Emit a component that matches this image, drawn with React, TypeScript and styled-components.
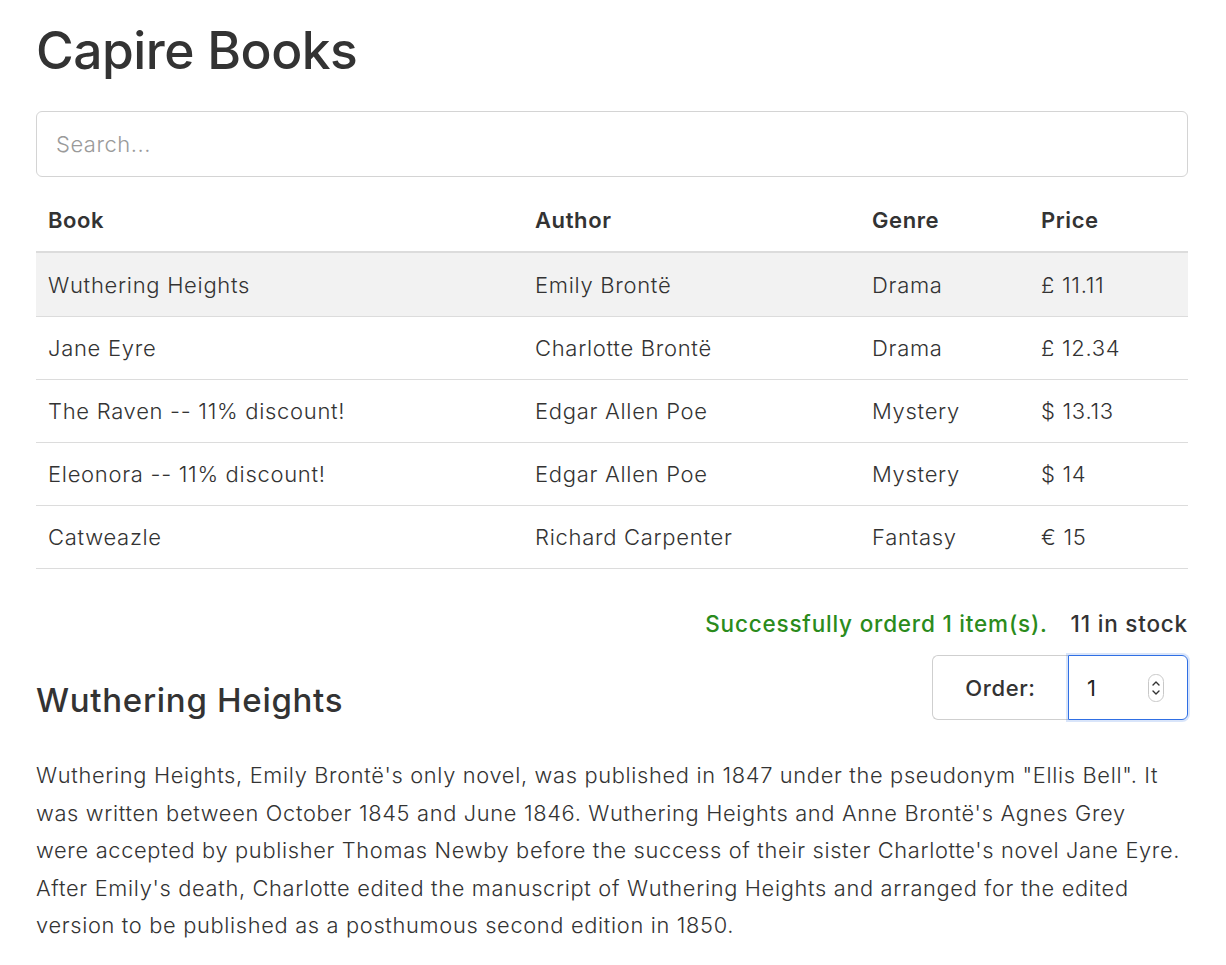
import React from "react";
import styled, { createGlobalStyle } from "styled-components";

const GlobalStyle = createGlobalStyle`
  html, body { margin: 0; padding: 0; background: #fff; }
  body {
    font-family: Inter, "Noto Sans", "Liberation Sans", sans-serif;
    color: #333;
    -webkit-font-smoothing: antialiased;
  }
  * { box-sizing: border-box; }
`;

const Page = styled.div`
  padding: 0 38px 0 36px;
  width: 1226px;
`;

const Title = styled.h1`
  font-size: 51.5px;
  font-weight: 500;
  line-height: 1.2;
  margin: 20px 0 29px;
  letter-spacing: -0.5px;
`;

const Search = styled.input`
  display: block;
  width: 100%;
  height: 66px;
  border: 1px solid #d4d4d4;
  border-radius: 6px;
  padding: 0 19px;
  font-family: inherit;
  font-size: 22px;
  font-weight: 300;
  letter-spacing: 0.5px;
  color: #333;
  outline: none;
  &::placeholder { color: #9a9a9a; }
`;

const Table = styled.table`
  width: 100%;
  border-collapse: collapse;
  margin-top: 13px;
  font-size: 22px;
  table-layout: fixed;
`;

const Th = styled.th<{ $w: number }>`
  width: ${(p) => p.$w}px;
  text-align: left;
  font-weight: 600;
  letter-spacing: 0.6px;
  height: 62px;
  padding: 0 12px;
  border-bottom: 2px solid #dcdcdc;
  vertical-align: middle;
`;

const Tr = styled.tr<{ $active?: boolean }>`
  background: ${(p) => (p.$active ? "#f2f2f2" : "transparent")};
  &:first-child td { height: 65px; }
`;

const Td = styled.td`
  height: 63px;
  padding: 0 12px;
  font-weight: 300;
  letter-spacing: 0.7px;
  border-bottom: 1px solid #dcdcdc;
  vertical-align: middle;
  white-space: nowrap;
`;

const StatusRow = styled.div`
  display: flex;
  justify-content: flex-end;
  gap: 23px;
  margin-top: 40px;
  font-size: 22.5px;
  font-weight: 500;
  letter-spacing: 0.8px;
  line-height: 30px;
`;

const Success = styled.span`
  color: #2b8b1c;
`;

const OrderRow = styled.div`
  display: flex;
  justify-content: space-between;
  align-items: flex-end;
  margin-top: 16px;
`;

const BookTitle = styled.h3`
  font-size: 33px;
  font-weight: 500;
  margin: 0;
  line-height: 1.2;
  letter-spacing: 0.7px;
`;

const InputGroup = styled.div`
  display: flex;
  height: 65px;
`;

const Addon = styled.div`
  width: 136px;
  display: flex;
  align-items: center;
  justify-content: center;
  border: 1px solid #cfcfcf;
  border-right: none;
  border-radius: 6px 0 0 6px;
  font-size: 22px;
  font-weight: 500;
  letter-spacing: 0.6px;
`;

const NumberBox = styled.div`
  width: 120px;
  display: flex;
  align-items: center;
  padding: 0 23px 0 18px;
  border: 1px solid #2f6fe4;
  border-radius: 0 6px 6px 0;
  box-shadow: 0 0 0 2px rgba(47, 111, 228, 0.18);
`;

const NumberInput = styled.input`
  flex: 1;
  width: 0;
  border: none;
  outline: none;
  background: transparent;
  font-family: inherit;
  font-size: 22px;
  font-weight: 400;
  color: #222;
  padding: 0;
`;

const Paragraph = styled.p`
  font-size: 21.8px;
  font-weight: 300;
  letter-spacing: 0.68px;
  line-height: 37.4px;
  margin: 37px 0 0;
`;

const Stepper = () => (
  <svg width="16" height="28" viewBox="0 0 16 28">
    <rect x="0.5" y="0.5" width="15" height="27" rx="7" fill="#fff" stroke="#c8c8c8" />
    <path d="M5 11 L8 8 L11 11" fill="none" stroke="#333" strokeWidth="1.4" strokeLinecap="round" strokeLinejoin="round" />
    <path d="M5 17 L8 20 L11 17" fill="none" stroke="#333" strokeWidth="1.4" strokeLinecap="round" strokeLinejoin="round" />
  </svg>
);

const books = [
  ["Wuthering Heights", "Emily Brontë", "Drama", "£ 11.11"],
  ["Jane Eyre", "Charlotte Brontë", "Drama", "£ 12.34"],
  ["The Raven -- 11% discount!", "Edgar Allen Poe", "Mystery", "$ 13.13"],
  ["Eleonora -- 11% discount!", "Edgar Allen Poe", "Mystery", "$ 14"],
  ["Catweazle", "Richard Carpenter", "Fantasy", "€ 15"],
];

const descriptionLines = [
  "Wuthering Heights, Emily Brontë's only novel, was published in 1847 under the pseudonym \"Ellis Bell\". It",
  "was written between October 1845 and June 1846. Wuthering Heights and Anne Brontë's Agnes Grey",
  "were accepted by publisher Thomas Newby before the success of their sister Charlotte's novel Jane Eyre.",
  "After Emily's death, Charlotte edited the manuscript of Wuthering Heights and arranged for the edited",
  "version to be published as a posthumous second edition in 1850.",
];

export default function App() {
  return (
    <>
      <GlobalStyle />
      <Page>
        <Title>Capire Books</Title>
        <Search placeholder="Search..." />
        <Table>
          <thead>
            <tr>
              <Th $w={487}>Book</Th>
              <Th $w={337}>Author</Th>
              <Th $w={169}>Genre</Th>
              <Th $w={159}>Price</Th>
            </tr>
          </thead>
          <tbody>
            {books.map((b, i) => (
              <Tr key={b[0]} $active={i === 0}>
                {b.map((c, j) => (
                  <Td key={j}>{c}</Td>
                ))}
              </Tr>
            ))}
          </tbody>
        </Table>
        <StatusRow>
          <Success>Successfully orderd 1 item(s).</Success>
          <span>11 in stock</span>
        </StatusRow>
        <OrderRow>
          <BookTitle>Wuthering Heights</BookTitle>
          <InputGroup>
            <Addon>Order:</Addon>
            <NumberBox>
              <NumberInput defaultValue="1" />
              <Stepper />
            </NumberBox>
          </InputGroup>
        </OrderRow>
        <Paragraph>
          {descriptionLines.map((line, i) => (
            <React.Fragment key={i}>
              {line}
              {i < descriptionLines.length - 1 && <br />}
            </React.Fragment>
          ))}
        </Paragraph>
      </Page>
    </>
  );
}
